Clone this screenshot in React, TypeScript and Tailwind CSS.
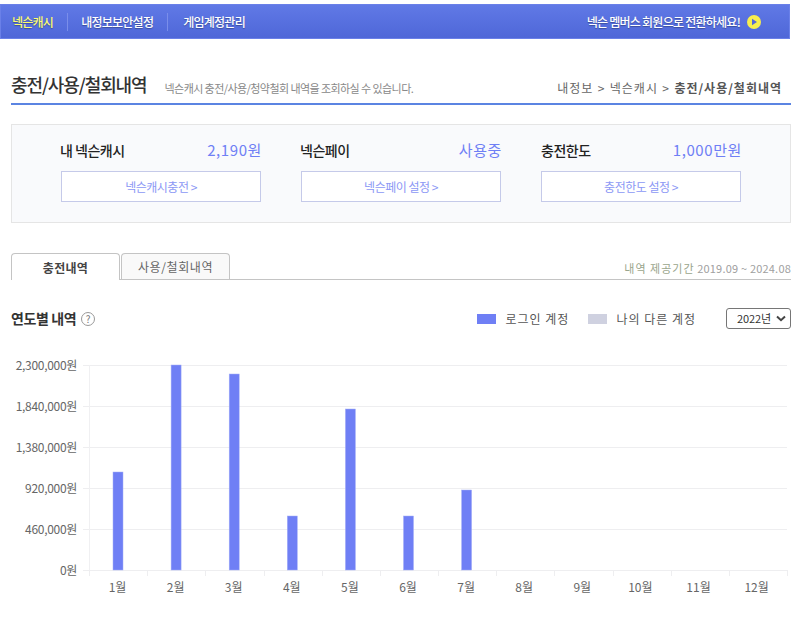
import React from "react";

const bars = [
  { month: 1, top: 472 },
  { month: 2, top: 365 },
  { month: 3, top: 374 },
  { month: 4, top: 516 },
  { month: 5, top: 409 },
  { month: 6, top: 516 },
  { month: 7, top: 490 },
];

const gridLines = [
  { y: 365.5, label: "2,300,000원" },
  { y: 406.5, label: "1,840,000원" },
  { y: 447.5, label: "1,380,000원" },
  { y: 488.5, label: "920,000원" },
  { y: 529.5, label: "460,000원" },
  { y: 570.5, label: "0원" },
];

const months = [1, 2, 3, 4, 5, 6, 7, 8, 9, 10, 11, 12];
const step = 58.17;

function Chart() {
  return (
    <svg width="791" height="250" viewBox="0 350 791 250" className="block">
      {gridLines.map((g) => (
        <g key={g.y}>
          <line x1="83" x2="787" y1={g.y} y2={g.y} stroke="#eeeef0" />
          <text x="77" y={g.y + 4.5} textAnchor="end" fontSize="12" fill="#666666" letterSpacing="-0.3">
            {g.label}
          </text>
        </g>
      ))}
      <line x1="89.5" x2="89.5" y1="365" y2="576" stroke="#f0f0f2" />
      {months.concat(13).map((m) => (
        <line
          key={m}
          x1={Math.round(89 + (m - 1) * step) + 0.5}
          x2={Math.round(89 + (m - 1) * step) + 0.5}
          y1="570"
          y2="576"
          stroke="#eeeef0"
        />
      ))}
      {bars.map((b) => (
        <rect
          key={b.month}
          x={113 + (b.month - 1) * 58.1}
          y={b.top}
          width="10"
          height={570 - b.top}
          fill="#6f7ff5"
          stroke="#a3aef8"
          strokeWidth="0.5"
        />
      ))}
      {months.map((m) => (
        <text
          key={m}
          x={117.5 + (m - 1) * 58.1}
          y="592"
          textAnchor="middle"
          fontSize="12"
          fill="#666666"
        >
          {m}월
        </text>
      ))}
    </svg>
  );
}

function SummaryItem({ title, value, action, shift }: { title: string; value: string; action: string; shift?: boolean }) {
  return (
    <div className="w-[200px]">
      <div className="flex items-center justify-between h-[20px]">
        <span className={shift ? "-ml-[1px] text-[14px] font-medium text-[#222222] tracking-[-0.5px]" : "text-[14px] font-medium text-[#222222] tracking-[-0.5px]"}>{title}</span>
        <span className="-mr-[1px] text-[15px] text-[#6f7ff5] tracking-[0.6px]">{value}</span>
      </div>
      <a className="mt-[11px] flex items-center justify-center h-[31px] bg-white border border-[#c5cae9] text-[12px] text-[#8c98f5] tracking-[-0.5px]">
        {action}
      </a>
    </div>
  );
}

export default function App() {
  return (
    <div
      className="w-[791px] h-[624px] overflow-hidden bg-white"
      style={{ fontFamily: '"Noto Sans CJK KR", "Noto Sans", sans-serif' }}
    >
      <div className="pt-[4px]">
        <div className="h-[35px] w-[790px] flex items-center justify-between border border-[#6a80e8] bg-gradient-to-b from-[#6079e6] to-[#4f67d8] [text-shadow:0_1px_1px_rgba(0,0,0,0.3)]">
          <ul className="flex items-center text-[12px] font-medium text-white tracking-[-0.75px]">
            <li className="pl-[11px] pr-[14px] text-[#fdfd70]">넥슨캐시</li>
            <li className="pl-[13px] pr-[14px] border-l border-[#7a8eea]">내정보보안설정</li>
            <li className="pl-[15px] border-l border-[#7a8eea]">게임계정관리</li>
          </ul>
          <div className="flex items-center pr-[28px] text-[12px] font-medium text-white tracking-[-0.75px]">
            <span>넥슨 멤버스 회원으로 전환하세요!</span>
            <svg width="14" height="14" viewBox="0 0 14 14" className="ml-[7px]">
              <circle cx="7" cy="7" r="7" fill="#f7ee4e" />
              <path d="M5 3.8 L10 7 L5 10.2 Z" fill="#5468d8" />
            </svg>
          </div>
        </div>
      </div>

      <div className="mt-[30px] ml-[11px] w-[780px] h-[36px] flex items-end justify-between border-b-2 border-[#5b84e2] pb-[5px]">
        <div className="flex items-end">
          <h1 className="text-[18px] leading-[28px] font-medium text-[#333333] tracking-[-1.1px]">충전/사용/철회내역</h1>
          <p className="ml-[18px] text-[11px] leading-[20px] text-[#888888] tracking-[-0.57px]">
            넥슨캐시 충전/사용/청약철회 내역을 조회하실 수 있습니다.
          </p>
        </div>
        <div className="pr-[9px] text-[12px] leading-[20px] text-[#666666] tracking-[1px] [word-spacing:0.7px]">
          내정보 &gt; 넥슨캐시 &gt; <span className="font-bold text-[#555555]">충전/사용/철회내역</span>
        </div>
      </div>

      <div className="mt-[19px] ml-[11px] w-[780px] h-[99px] flex gap-[40px] pl-[49px] pt-[15px] bg-[#f9fafc] border border-[#e5e5e5]">
        <SummaryItem shift title="내 넥슨캐시" value="2,190원" action="넥슨캐시충전 >" />
        <SummaryItem shift title="넥슨페이" value="사용중" action="넥슨페이 설정 >" />
        <SummaryItem title="충전한도" value="1,000만원" action="충전한도 설정 >" />
      </div>

      <div className="mt-[30px] ml-[11px] w-[780px] h-[27px] flex items-end justify-between border-b border-[#c4c4c4]">
        <div className="flex items-end gap-[1px]">
          <div className="relative top-[1px] w-[109px] h-[27px] pt-[2px] flex items-center justify-center rounded-t-[4px] border border-b-0 border-[#c4c4c4] bg-white text-[12px] font-bold text-[#444444] tracking-[0.3px]">
            충전내역
          </div>
          <div className="w-[109px] h-[26px] flex items-center justify-center rounded-t-[4px] border border-b-0 border-[#c4c4c4] bg-[#f9f9f9] text-[12px] text-[#666666] tracking-[0.6px]">
            사용/철회내역
          </div>
        </div>
        <div className="pb-[3px] text-[11px] text-[#a0a0a0] tracking-[0.2px]">
          <span className="text-[#9aa58c] tracking-[1px]">내역 제공기간</span> 2019.09 ~ 2024.08
        </div>
      </div>

      <div className="mt-[19px] mb-[12px] ml-[11px] w-[780px] h-[39px] flex items-center justify-between">
        <div className="flex items-center">
          <span className="text-[14px] font-bold text-[#333333] tracking-[-0.4px]">연도별 내역</span>
          <span className="ml-[5px] w-[14px] h-[14px] flex items-center justify-center rounded-full border border-[#999999] text-[10px] text-[#777777]">?</span>
        </div>
        <div className="flex items-center text-[12px] text-[#555555] tracking-[1px]">
          <span className="w-[19px] h-[10px] bg-[#6f7ff5]" />
          <span className="ml-[9px]">로그인 계정</span>
          <span className="ml-[19px] w-[19px] h-[10px] bg-[#cfd1e0]" />
          <span className="ml-[9px]">나의 다른 계정</span>
          <div className="relative ml-[30px]">
            <select
              defaultValue="2022"
              className="block w-[65px] h-[21px] appearance-none rounded-[3px] border border-[#767676] bg-white text-[11px] text-[#333333] pl-[10px] tracking-[-0.1px]"
            >
              <option value="2022">2022년</option>
            </select>
            <svg width="10" height="7" viewBox="0 0 10 7" className="absolute right-[5px] top-[7px] pointer-events-none">
              <path d="M1 1.5 L5 5.2 L9 1.5" fill="none" stroke="#444444" strokeWidth="2" />
            </svg>
          </div>
        </div>
      </div>

      <Chart />
    </div>
  );
}
